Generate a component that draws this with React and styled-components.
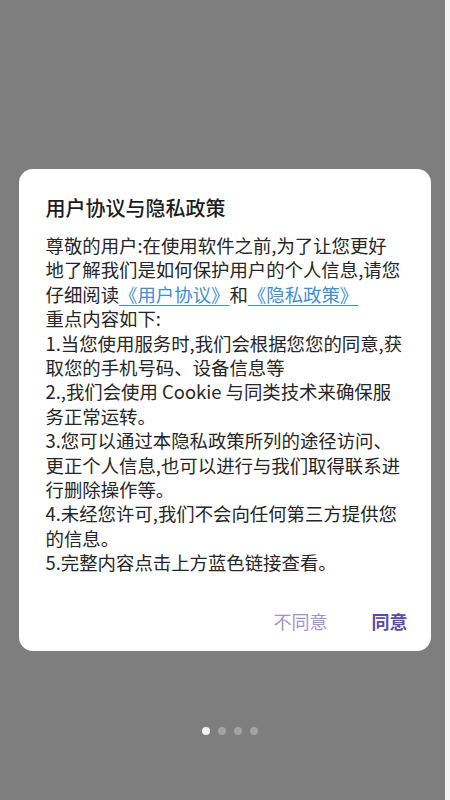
import React from 'react';
import styled, { createGlobalStyle } from 'styled-components';

const GlobalStyle = createGlobalStyle`
  html, body {
    margin: 0;
    padding: 0;
    background: #7e7e7e;
  }
  * { box-sizing: border-box; }
`;

const Screen = styled.div`
  width: 450px;
  height: 800px;
  background: #7e7e7e;
  border-right: 5px solid #f4f4f4;
  display: flex;
  flex-direction: column;
  align-items: center;
  padding-top: 169px;
  font-family: "Noto Sans CJK SC", "Noto Sans", sans-serif;
`;

const Dialog = styled.div`
  width: 412px;
  margin-left: 4px;
  background: #fff;
  border-radius: 14px;
  padding: 25px 23px 18px 27px;
  display: flex;
  flex-direction: column;
`;

const Title = styled.h2`
  margin: 0;
  font-size: 20px;
  line-height: 28px;
  font-weight: 500;
  color: #1c1c1c;
`;

const Body = styled.p`
  margin: 11px 0 0;
  font-size: 18.4px;
  line-height: 24.4px;
  color: #262626;
  white-space: nowrap;
`;

const Link = styled.a`
  color: #3d8fd4;
  text-decoration: underline;
  text-underline-offset: 3px;
  text-decoration-thickness: 1px;
`;

const Actions = styled.div`
  display: flex;
  justify-content: flex-end;
  gap: 44px;
  margin-top: 34px;
`;

const Action = styled.button`
  border: none;
  background: none;
  padding: 0;
  font-family: inherit;
  font-size: 18px;
  line-height: 24px;
  font-weight: ${(p) => (p.$primary ? 600 : 400)};
  color: ${(p) => (p.$primary ? '#5b4ba8' : '#9f93d2')};
`;

const Dots = styled.div`
  display: flex;
  gap: 8px;
  margin: 76px 0 0 14px;
`;

const Dot = styled.span`
  width: 8px;
  height: 8px;
  border-radius: 50%;
  background: ${(p) => (p.$active ? '#f2f2f2' : '#a3a3a3')};
`;

export default function App() {
  return (
    <>
      <GlobalStyle />
      <Screen>
        <Dialog>
          <Title>用户协议与隐私政策</Title>
          <Body>
            尊敬的用户:在使用软件之前,为了让您更好<br />
            地了解我们是如何保护用户的个人信息,请您<br />
            仔细阅读<Link>《用户协议》</Link>和<Link>《隐私政策》</Link><br />
            重点内容如下:<br />
            1.当您使用服务时,我们会根据您您的同意,获<br />
            取您的手机号码、设备信息等<br />
            2.,我们会使用 Cookie 与同类技术来确保服<br />
            务正常运转。<br />
            3.您可以通过本隐私政策所列的途径访问、<br />
            更正个人信息,也可以进行与我们取得联系进<br />
            行删除操作等。<br />
            4.未经您许可,我们不会向任何第三方提供您<br />
            的信息。<br />
            5.完整内容点击上方蓝色链接查看。
          </Body>
          <Actions>
            <Action>不同意</Action>
            <Action $primary>同意</Action>
          </Actions>
        </Dialog>
        <Dots>
          <Dot $active />
          <Dot />
          <Dot />
          <Dot />
        </Dots>
      </Screen>
    </>
  );
}
